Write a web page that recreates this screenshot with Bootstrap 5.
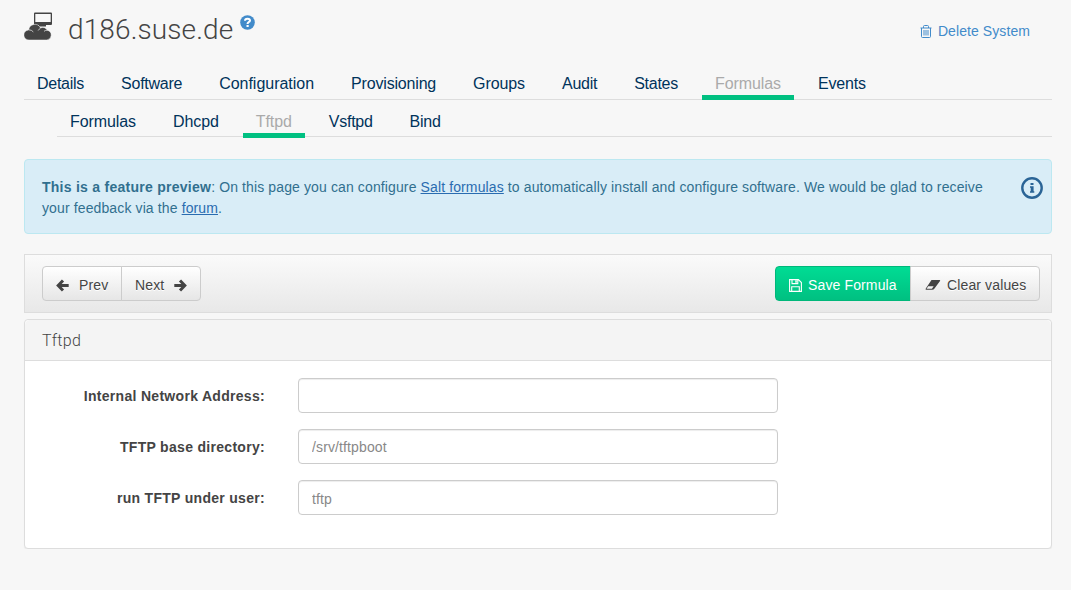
<!DOCTYPE html>
<html lang="en">
<head>
<meta charset="utf-8">
<meta name="viewport" content="width=device-width, initial-scale=1">
<title>d186.suse.de</title>
<link href="https://cdn.jsdelivr.net/npm/bootstrap@5.3.0/dist/css/bootstrap.min.css" rel="stylesheet">
<style>
body{background:#f7f7f7;color:#444;font:14px/21px "Liberation Sans",Arial,sans-serif;overflow:hidden}
svg{display:block;flex:none}
.page{padding:0 19px 0 24px}
.page-head{height:73px;padding-top:11px}
.system-name{font:300 28px/38px Roboto,sans-serif;letter-spacing:.12px;margin:0 0 0 16px;color:#444}
.help-icon{margin:3.500px 0 0 6.500px}
.delete-link{color:#428bca;text-decoration:none;letter-spacing:.08px;margin:10px 22px 0 0;gap:6px}
.tabs{border-bottom:1px solid #ddd;font-size:16px;gap:11px;flex-wrap:nowrap}
.tabs .nav-link{color:#00335b;padding:0 13px;line-height:22px;height:27px;border-bottom:5px solid transparent;margin-bottom:-1px;white-space:nowrap;letter-spacing:-.09px}
.tabs .nav-link.active{color:#aaa;border-color:#00c081}
.tabs .nav-link.snug{letter-spacing:-.26px}
.tabs .nav-link.even{letter-spacing:-.02px}
.tabs .nav-link.close-set{letter-spacing:-.18px}
.subtabs{margin:11px 0 22px 33px}
.subtabs .nav-link{margin-bottom:-2px}
.preview-note{height:75px;background:#d9edf7;border:1px solid #bce8f1;border-radius:4px;color:#31708f;padding:17px 8px 0 17px;margin:0;letter-spacing:.12px}
.preview-note p{width:950px;margin:0}
.preview-note strong{letter-spacing:.26px}
.preview-note a{color:#2a6cb0}
.preview-note svg{margin-top:-.5px}
.toolbar{height:59px;margin-top:20px;border:1px solid #ddd;background:linear-gradient(#fafafa,#e8e8e8);padding:0 11px 0 17px}
.tool-btn{display:flex;align-items:center;height:35px;border:1px solid #ccc;background:linear-gradient(#fff,#e6e6e6);color:#444;font-size:14px;line-height:21px;letter-spacing:.13px;padding:3px 13px 0;border-radius:4px;text-shadow:0 1px 0 #fff;white-space:nowrap}
.pager-btn{width:80px;gap:10px}
.save-btn{background:linear-gradient(#00dc94,#00c081);border-color:#00b77a;color:#fff;text-shadow:none;width:136px;gap:6px}
.clear-btn{width:130px;gap:6px;padding-left:14px}
.panel{margin-top:6px;height:230px;border:1px solid #ddd;border-radius:4px;background:#fff;box-shadow:0 1px 1px rgba(0,0,0,.05)}
.panel .card-header{height:41px;background:#f4f4f4;border-bottom:1px solid #ddd;font:300 16px/42px Roboto,sans-serif;letter-spacing:.25px;padding:0 17px}
.panel .card-body{padding:17px 0 0}
.field{height:51.2px}
.field label{width:240px;font-weight:700;letter-spacing:.3px;padding-top:8px;text-align:right}
.field .form-control{width:480px;height:34.5px;margin-left:33px;border:1px solid #ccc;border-radius:4px;padding:2px 13px 0;font-size:14px;letter-spacing:.12px;color:#444;box-shadow:inset 0 1px 1px rgba(0,0,0,.075)}
.field .form-control::placeholder{color:#888}
</style>
</head>
<body>
<main class="page">
<header class="page-head d-flex align-items-start">
<svg width="28" height="30" viewBox="0 0 28 30" fill="#444"><path fill-rule="evenodd" d="M11 1.500h16q1 0 1 1V13q0 1-1 1h-5v1.500H15V14h-4q-1 0-1-1V2.500q0-1 1-1zM11.300 2.900v8.200h15.400V2.900z"/><path d="M5 29a5 5 0 0 1-.3-10A6.200 6.200 0 0 1 16.500 17 5 5 0 0 1 23.300 19.200 5 5 0 0 1 23 29z" stroke="#f7f7f7" stroke-width=".5"/><path d="M5 18.900q2.500-.2 4.300 2M16.500 17.200q-1.500.8-2.300 2.300M23.500 19.300q-2-.3-3.500 1" fill="none" stroke="#f7f7f7" stroke-width=".7"/></svg>
<h1 class="system-name">d186.suse.de</h1>
<svg class="help-icon" width="15" height="15" viewBox="0 0 15 15"><circle cx="7.500" cy="7.500" r="7.300" fill="#428bca"/><path d="M5 5.800Q5 3.700 7.500 3.700T10 5.600Q10 6.600 8.700 7.200 7.500 7.900 7.500 8.900" fill="none" stroke="#fff" stroke-width="2"/><path d="M6.500 10h2.200v2H6.500z" fill="#fff"/></svg>
<a href="#" class="delete-link d-flex align-items-center ms-auto"><svg width="12" height="13" viewBox="0 0 12 13" fill="none" stroke="#428bca"><path d="M.5 3h11M3.500 3V1.500q0-1 1-1h3q1 0 1 1V3M1.500 3v8.500q0 1 1 1h7q1 0 1-1V3M4 5v5.500M6 5v5.500M8 5v5.500"/></svg><span>Delete System</span></a>
</header>
<nav class="nav tabs">
<a class="nav-link snug" href="#">Details</a>
<a class="nav-link snug" href="#">Software</a>
<a class="nav-link even" href="#">Configuration</a>
<a class="nav-link close-set" href="#">Provisioning</a>
<a class="nav-link" href="#">Groups</a>
<a class="nav-link snug" href="#">Audit</a>
<a class="nav-link snug" href="#">States</a>
<a class="nav-link active" href="#">Formulas</a>
<a class="nav-link close-set" href="#">Events</a>
</nav>
<nav class="nav tabs subtabs">
<a class="nav-link" href="#">Formulas</a>
<a class="nav-link" href="#">Dhcpd</a>
<a class="nav-link active" href="#">Tftpd</a>
<a class="nav-link snug" href="#">Vsftpd</a>
<a class="nav-link snug" href="#">Bind</a>
</nav>
<div class="alert preview-note d-flex justify-content-between align-items-start">
<p><strong>This is a feature preview</strong>: On this page you can configure <a href="#">Salt formulas</a> to automatically install and configure software. We would be glad to receive<br>your feedback via the <a href="#">forum</a>.</p>
<svg width="22" height="22" viewBox="0 0 22 22" fill="#2a6496"><circle cx="11" cy="11" r="9.700" fill="none" stroke="#2a6496" stroke-width="2.400"/><path d="M9.500 6h3v2h-3zM9 9.300h3.600v5h.7v1.500H9v-1.500h.7v-3.500H9z"/></svg>
</div>
<div class="toolbar d-flex align-items-center justify-content-between">
<div class="btn-group">
<button class="btn tool-btn pager-btn"><svg width="13" height="13" viewBox="0 0 13 13" fill="none" stroke="#444" stroke-width="3"><path d="M7 1.500 2.200 6.500 7 11.500M2.500 6.500h10.200"/></svg>Prev</button>
<button class="btn tool-btn pager-btn">Next<svg width="13" height="13" viewBox="0 0 13 13" fill="none" stroke="#444" stroke-width="3"><path d="m6 1.500 4.800 5L6 11.500M.3 6.500h10.200"/></svg></button>
</div>
<div class="btn-group">
<button class="btn tool-btn save-btn"><svg width="13" height="13" viewBox="0 0 13 13" fill="none" stroke="#fff" stroke-width="1.100"><path d="M.6.6h8.800l3 3v8.800H.6zM3 .6v4h5.800v-4M2.700 12.400V7.700h7.600v4.700"/><path d="M6.300 1.200h1.500v2.600H6.300z" fill="#fff" stroke="none"/></svg>Save Formula</button>
<button class="btn tool-btn clear-btn"><svg width="16" height="12" viewBox="0 0 16 12"><path d="M6.500 1h8q1.200 0 .5 1l-5.500 7.500q-.8 1.300-2.300 1.300H1.300q-1.300 0-.5-1.300z" fill="#444"/><path d="M3.200 7.300 1.600 9.700h5.300l1.800-2.400z" fill="#f3f3f3"/></svg>Clear values</button>
</div>
</div>
<section class="card panel">
<div class="card-header">Tftpd</div>
<div class="card-body">
<div class="field d-flex"><label for="address">Internal Network Address:</label><input id="address" class="form-control"></div>
<div class="field d-flex"><label for="base">TFTP base directory:</label><input id="base" class="form-control" placeholder="/srv/tftpboot"></div>
<div class="field d-flex"><label for="user">run TFTP under user:</label><input id="user" class="form-control" placeholder="tftp"></div>
</div>
</section>
</main>
<script src="https://cdn.jsdelivr.net/npm/bootstrap@5.3.0/dist/js/bootstrap.bundle.min.js"></script>
</body>
</html>
